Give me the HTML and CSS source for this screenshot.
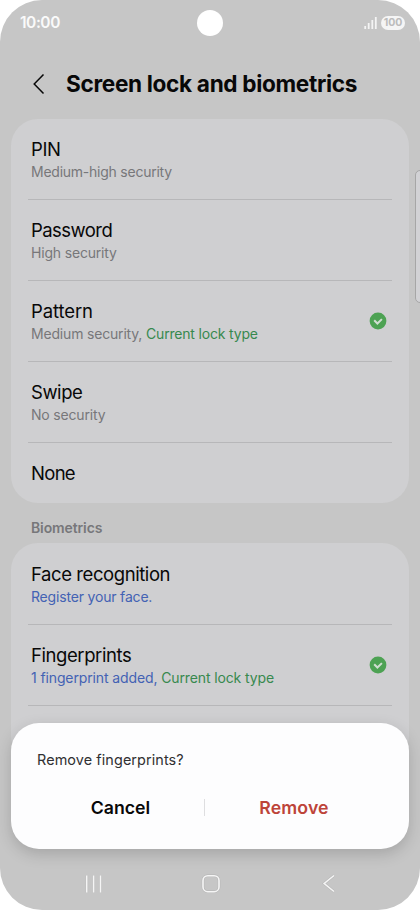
FILE: index.html
```html
<!DOCTYPE html>
<html lang="en">
<head>
<meta charset="utf-8">
<title>Screen lock and biometrics</title>
<link rel="stylesheet" href="styles.css">
</head>
<body>
<div class="phone">
  <header class="status">
    <span class="time">10:00</span>
    <span class="camera"></span>
    <div class="indicators">
      <svg class="signal" width="13" height="14" viewBox="0 0 13 14"><path d="M1.2 10v3M4.7 7v6M8.3 4v9M11.8 1v12" fill="none" stroke="#f4f4f4" stroke-width="1.8"/></svg>
      <span class="battery">100</span>
    </div>
  </header>
  <div class="titlebar">
    <svg class="back" width="12" height="22" viewBox="0 0 12 22"><path d="M10.5 1.5L1.2 11l9.3 9.5" fill="none" stroke="#080808" stroke-width="1.5"/></svg>
    <h1>Screen lock and biometrics</h1>
  </div>
  <main>
    <section class="card">
      <div class="row"><div><h2 class="pin">PIN</h2><p class="medium-high">Medium-high security</p></div></div>
      <div class="row"><div><h2 class="password">Password</h2><p>High security</p></div></div>
      <div class="row"><div><h2 class="pattern">Pattern</h2><p>Medium security, <span class="green">Current lock type</span></p></div>
        <svg class="check" width="18" height="18" viewBox="0 0 18 18"><circle cx="9" cy="9" r="8.4" fill="#4da253"/><path d="M5.2 8.3l3.2 3.2 4.5-4.4" fill="none" stroke="#d0ded1" stroke-width="2"/></svg></div>
      <div class="row"><div><h2 class="swipe">Swipe</h2><p>No security</p></div></div>
      <div class="row single"><h2 class="none">None</h2></div>
    </section>
    <h3>Biometrics</h3>
    <section class="card biometrics">
      <div class="row"><div><h2 class="face">Face recognition</h2><p class="blue">Register your face.</p></div></div>
      <div class="row"><div><h2 class="fingers">Fingerprints</h2><p class="blue added">1 fingerprint added, <span class="green">Current lock type</span></p></div>
        <svg class="check" width="18" height="18" viewBox="0 0 18 18"><circle cx="9" cy="9" r="8.4" fill="#4da253"/><path d="M5.2 8.3l3.2 3.2 4.5-4.4" fill="none" stroke="#d0ded1" stroke-width="2"/></svg></div>
    </section>
  </main>
  <span class="edge-panel"></span>
  <div class="dialog">
    <p class="question">Remove fingerprints?</p>
    <div class="actions"><button class="cancel">Cancel</button><i></i><button class="remove">Remove</button></div>
  </div>
  <nav>
    <svg width="20" height="20" viewBox="0 0 20 20"><path d="M3.7 1.5v17M10.6 1.5v17M17.5 1.5v17" class="shade"/><path d="M3.7 1.5v17M10.6 1.5v17M17.5 1.5v17" class="line"/></svg>
    <svg width="20" height="20" viewBox="0 0 20 20"><rect x="2" y="1.7" width="16" height="16" rx="4.8" class="shade"/><rect x="2" y="1.7" width="16" height="16" rx="4.8" class="line"/></svg>
    <svg width="20" height="20" viewBox="0 0 20 20"><path d="M15 1.5L5.2 9.5l9.8 8" class="shade"/><path d="M15 1.5L5.2 9.5l9.8 8" class="line"/></svg>
  </nav>
</div>
</body>
</html>
```
FILE: styles.css
```css
* { box-sizing: border-box; }
body { margin: 0; background: #fff; font-family: Inter, Roboto, sans-serif; }
h1, h2, h3, p { margin: 0; white-space: nowrap; }
svg { display: block; flex: none; }
.phone { position: relative; width: 420px; height: 910px; overflow: hidden; border-radius: 42px; background: #c6c6c6; }
.status { height: 45px; display: grid; grid-template-columns: 1fr 26px 1fr; align-items: center; padding: 0 15px 0 20px; }
.time { color: #fafafa; font-size: 15.5px; font-weight: 600; letter-spacing: -.45px; }
.camera { width: 26px; height: 26px; border-radius: 50%; background: #fff; margin-left: -2.5px; }
.indicators { display: flex; justify-content: flex-end; align-items: center; gap: 4px; }
.battery { width: 24px; height: 14px; border-radius: 7px; background: #f5f5f5; color: #bcbcbc; font-size: 10.5px; line-height: 14.5px; font-weight: 700; text-align: center; }
.titlebar { height: 74px; display: flex; align-items: center; gap: 21px; padding: 4px 0 0 33px; }
.back { margin-top: -1px; }
h1 { font-size: 22.6px; line-height: 28px; font-weight: 700; letter-spacing: -.33px; color: #080808; }
main { padding: 0 11px; }
.card { background: #cfcfd1; border-radius: 27px; padding: 0 17px; height: 383.5px; }
.biometrics { height: 220px; padding-top: 1px; }
.row { height: 81px; padding: 18px 5px 0 3px; display: flex; justify-content: space-between; border-bottom: 1px solid #b7b7b9; }
.single { height: 60px; border: 0; }
h2 { font-size: 18.5px; line-height: 24px; font-weight: 400; letter-spacing: -.42px; color: #080808; }
.password { letter-spacing: -.55px; }
.pattern { letter-spacing: -.1px; }
.swipe { letter-spacing: -.45px; }
.none { letter-spacing: -.7px; }
.row p { font-size: 14px; line-height: 18px; margin-top: 2px; letter-spacing: -.18px; color: #77777a; }
.row .medium-high { letter-spacing: -.24px; }
.row .blue { color: #4362b4; }
.row .added { letter-spacing: -.12px; }
.row .green { color: #37894e; }
.check { margin-top: 12.5px; }
h3 { height: 40.5px; padding: 16.5px 0 0 20px; font-size: 14px; line-height: 18px; font-weight: 600; letter-spacing: -.12px; color: #77777a; }
.edge-panel { position: absolute; left: 415px; top: 170px; width: 10px; height: 133px; border: 1px solid #a6a6a6; border-radius: 5px; background: #d2d2d5; }
.dialog { position: absolute; left: 11px; top: 723px; width: 398px; height: 126px; border-radius: 28px; background: #fdfdfe; box-shadow: 0 5px 15px rgba(0,0,0,.17); padding: 27px 26px 0; }
.question { font-size: 14.4px; line-height: 19px; letter-spacing: .1px; color: #303032; }
.actions { display: grid; grid-template-columns: 167px 1px 178px; align-items: center; height: 36px; margin-top: 20px; }
.actions i { width: 1px; height: 17px; background: #dedee0; }
button { border: 0; padding: 0; background: none; font: 600 17.7px Inter, Roboto, sans-serif; color: #080808; }
.remove { color: #bd4439; letter-spacing: .1px; }
nav { position: absolute; left: 83px; top: 874px; width: 256px; display: flex; justify-content: space-between; }
.shade { fill: none; stroke: #b9b9b9; stroke-width: 2.8; }
.line { fill: none; stroke: #f5f5f5; stroke-width: 1.6; }
```
